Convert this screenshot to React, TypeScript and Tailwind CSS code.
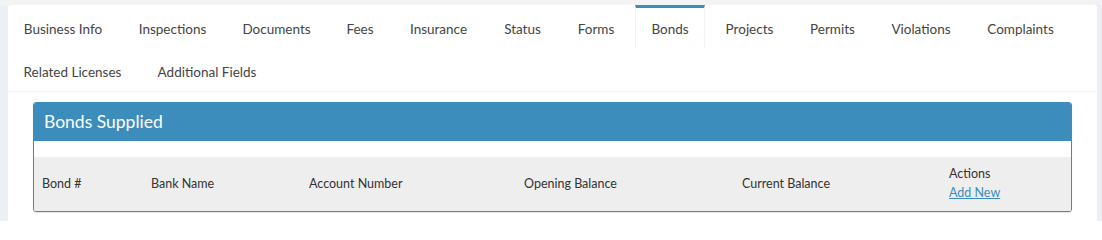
import React from "react";

const tabs: { label: string; w: string }[] = [
  { label: "Business Info", w: "w-[110px]" },
  { label: "Inspections", w: "w-[99px]" },
  { label: "Documents", w: "w-[99px]" },
  { label: "Fees", w: "w-[58px]" },
  { label: "Insurance", w: "w-[89px]" },
  { label: "Status", w: "w-[69px]" },
  { label: "Forms", w: "w-[68px]" },
  { label: "Bonds", w: "w-[70px]" },
  { label: "Projects", w: "w-[79px]" },
  { label: "Permits", w: "w-[77px]" },
  { label: "Violations", w: "w-[90px]" },
  { label: "Complaints", w: "w-[99px]" },
  { label: "Related Licenses", w: "w-[129px]" },
  { label: "Additional Fields", w: "w-[130px]" },
];

function Tab({ label, w }: { label: string; w: string }) {
  const active = label === "Bonds";
  return (
    <li className={"mr-[5px] list-none " + w}>
      <a
        className={
          "block h-[43px] whitespace-nowrap border-t-[3px] pt-[11px] text-center text-[13.5px] leading-[20px] text-[#444] " +
          (active ? "border-x border-x-[#f4f4f4] border-t-[#3c8dbc] bg-white" : "border-t-transparent")
        }
      >
        {label}
      </a>
    </li>
  );
}

export default function App() {
  return (
    <div
      className="flex h-[221px] w-[1102px] bg-[#ecf0f5]"
      style={{ fontFamily: "Lato, 'Liberation Sans', sans-serif" }}
    >
      <div className="flex flex-1 flex-col pl-[8px] pr-[5px]">
        <div className="-ml-[8px] -mr-[5px] h-[5px] shrink-0 bg-[#f3f3f3]" />
        <div className="flex-1 rounded-t-[3px] bg-white">
          <ul className="flex flex-wrap border-b border-[#f4f4f4]">
            {tabs.map((t) => (
              <Tab key={t.label} label={t.label} w={t.w} />
            ))}
          </ul>
          <div className="px-[25px] pt-[10px]">
            <div className="overflow-hidden rounded-[3px] border border-[#3c8dbc] shadow-[0_1px_1px_rgba(0,0,0,0.1)]">
              <div className="flex h-[38px] items-center bg-[#3c8dbc] px-[10px]">
                <h3 className="text-[17.5px] leading-none text-white">Bonds Supplied</h3>
              </div>
              <div className="h-[16px] bg-white" />
              <div className="flex h-[54px] items-center bg-[#eeeeee] text-[12.5px] leading-[20px] text-[#333]">
                <div className="w-[117px] pl-[8px]">Bond #</div>
                <div className="w-[158px]">Bank Name</div>
                <div className="w-[215px]">Account Number</div>
                <div className="w-[218px]">Opening Balance</div>
                <div className="w-[207px]">Current Balance</div>
                <div className="-mt-[3px] flex flex-col leading-[19px]">
                  <span>Actions</span>
                  <a className="text-[#3c8dbc] underline">Add New</a>
                </div>
              </div>
            </div>
          </div>
        </div>
      </div>
    </div>
  );
}
